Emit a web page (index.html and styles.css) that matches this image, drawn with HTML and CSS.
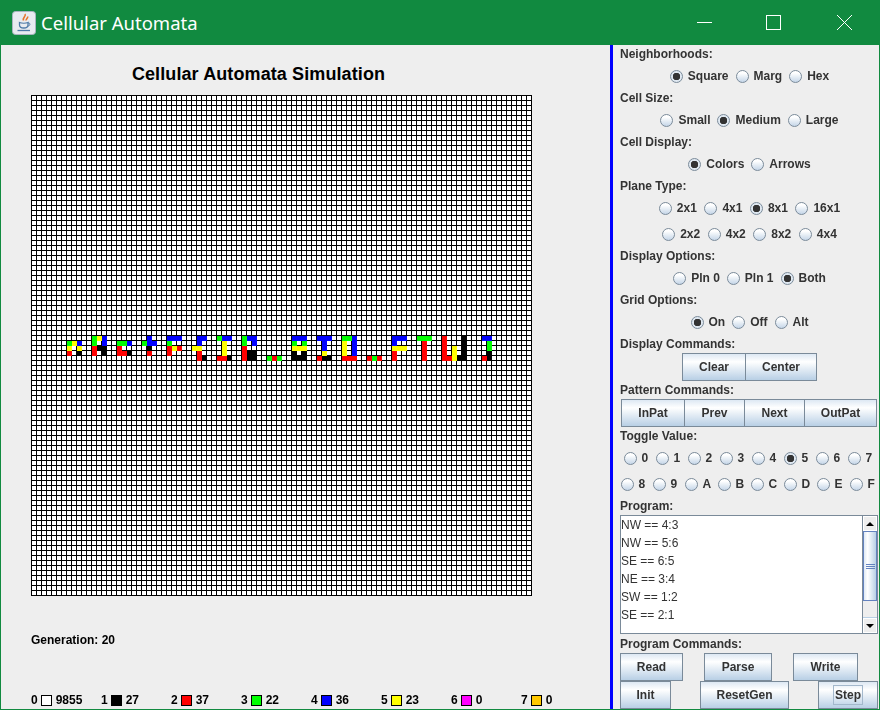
FILE: index.html
```html
<!DOCTYPE html>
<html lang="en">

<head>
    <meta charset="UTF-8">
    <title>Cellular Automata</title>
    <link rel="stylesheet" href="styles.css">
</head>

<body>
    <div class="window">
        <header class="titlebar">
            <svg class="app-icon" width="24" height="24" viewBox="0 0 24 24">
                <rect x="0.5" y="0.5" width="23" height="23" rx="3" fill="#e8ebf0" stroke="#aab4c0" />
                <path d="M13 3c1.5 2.500-3 3.500-1.500 6.500M15.500 5.500c1 1.500-2 2.500-1.200 4" fill="none" stroke="#e8742a" stroke-width="1.600" />
                <path d="M7.500 11.500c2 .8 6.500 .8 8.500 0v2.500c0 2-1.800 3-4.200 3s-4.300-1-4.300-3z" fill="none" stroke="#4f7aa8" stroke-width="1.300" />
                <path d="M16 12c2.500-.5 2.800 2.500-.5 3.500" fill="none" stroke="#4f7aa8" />
                <path d="M5.500 19.500h12.500" stroke="#4f7aa8" stroke-width="1.300" />
            </svg>
            <span class="app-title">Cellular Automata</span>
            <div class="window-buttons">
                <svg class="win-btn win-min" width="15" height="15" viewBox="0 0 15 15">
                    <path d="M0 7.500h15" stroke="#fff" />
                </svg>
                <svg class="win-btn win-max" width="15" height="15" viewBox="0 0 15 15">
                    <rect x="0.500" y="0.500" width="14" height="14" fill="none" stroke="#fff" />
                </svg>
                <svg class="win-btn win-close" width="15" height="15" viewBox="0 0 15 15">
                    <path d="M0 0l15 15M15 0L0 15" stroke="#fff" />
                </svg>
            </div>
        </header>

        <div class="content">
            <main class="sim-panel">
                <h1>Cellular Automata Simulation</h1>
                <canvas id="grid" width="501" height="501"></canvas>
                <p class="generation">Generation: 20</p>
                <div class="legend">
                    <div class="legend-item">0<span class="swatch c0"></span>9855</div>
                    <div class="legend-item">1<span class="swatch c1"></span>27</div>
                    <div class="legend-item">2<span class="swatch c2"></span>37</div>
                    <div class="legend-item">3<span class="swatch c3"></span>22</div>
                    <div class="legend-item">4<span class="swatch c4"></span>36</div>
                    <div class="legend-item">5<span class="swatch c5"></span>23</div>
                    <div class="legend-item">6<span class="swatch c6"></span>0</div>
                    <div class="legend-item">7<span class="swatch c7"></span>0</div>
                </div>
            </main>

            <aside class="controls">
                <div class="label">Neighborhoods:</div>
                <div class="radios">
                    <label><input type="radio" name="hood" checked>Square</label>
                    <label><input type="radio" name="hood">Marg</label>
                    <label><input type="radio" name="hood">Hex</label>
                </div>

                <div class="label">Cell Size:</div>
                <div class="radios">
                    <label><input type="radio" name="size">Small</label>
                    <label><input type="radio" name="size" checked>Medium</label>
                    <label><input type="radio" name="size">Large</label>
                </div>

                <div class="label">Cell Display:</div>
                <div class="radios">
                    <label><input type="radio" name="display" checked>Colors</label>
                    <label><input type="radio" name="display">Arrows</label>
                </div>

                <div class="label">Plane Type:</div>
                <div class="radios radios-wide">
                    <label><input type="radio" name="plane">2x1</label>
                    <label><input type="radio" name="plane">4x1</label>
                    <label><input type="radio" name="plane" checked>8x1</label>
                    <label><input type="radio" name="plane">16x1</label>
                </div>
                <div class="radios radios-wide radios-next">
                    <label><input type="radio" name="plane">2x2</label>
                    <label><input type="radio" name="plane">4x2</label>
                    <label><input type="radio" name="plane">8x2</label>
                    <label><input type="radio" name="plane">4x4</label>
                </div>

                <div class="label">Display Options:</div>
                <div class="radios">
                    <label><input type="radio" name="plane-show">Pln 0</label>
                    <label><input type="radio" name="plane-show">Pln 1</label>
                    <label><input type="radio" name="plane-show" checked>Both</label>
                </div>

                <div class="label">Grid Options:</div>
                <div class="radios">
                    <label><input type="radio" name="grid-opt" checked>On</label>
                    <label><input type="radio" name="grid-opt">Off</label>
                    <label><input type="radio" name="grid-opt">Alt</label>
                </div>

                <div class="label">Display Commands:</div>
                <div class="buttons btns-display">
                    <button>Clear</button>
                    <button>Center</button>
                </div>

                <div class="label label-tight">Pattern Commands:</div>
                <div class="buttons btns-pattern">
                    <button>InPat</button>
                    <button>Prev</button>
                    <button>Next</button>
                    <button>OutPat</button>
                </div>

                <div class="label">Toggle Value:</div>
                <div class="radios toggle">
                    <label><input type="radio" name="toggle">0</label>
                    <label><input type="radio" name="toggle">1</label>
                    <label><input type="radio" name="toggle">2</label>
                    <label><input type="radio" name="toggle">3</label>
                    <label><input type="radio" name="toggle">4</label>
                    <label><input type="radio" name="toggle" checked>5</label>
                    <label><input type="radio" name="toggle">6</label>
                    <label><input type="radio" name="toggle">7</label>
                </div>
                <div class="radios toggle toggle-letters radios-next">
                    <label><input type="radio" name="toggle">8</label>
                    <label><input type="radio" name="toggle">9</label>
                    <label><input type="radio" name="toggle">A</label>
                    <label><input type="radio" name="toggle">B</label>
                    <label><input type="radio" name="toggle">C</label>
                    <label><input type="radio" name="toggle">D</label>
                    <label><input type="radio" name="toggle">E</label>
                    <label><input type="radio" name="toggle">F</label>
                </div>

                <div class="label">Program:</div>
                <div class="program">
                    <div class="program-text">
                        <div>NW == 4:3</div>
                        <div>NW == 5:6</div>
                        <div>SE == 6:5</div>
                        <div>NE == 3:4</div>
                        <div>SW == 1:2</div>
                        <div>SE == 2:1</div>
                    </div>
                    <div class="scrollbar">
                        <div class="scroll-btn"><span class="arrow-up"></span></div>
                        <div class="scroll-thumb"><span class="grip"></span></div>
                        <div class="scroll-track"></div>
                        <div class="scroll-btn"><span class="arrow-down"></span></div>
                    </div>
                </div>

                <div class="label label-program">Program Commands:</div>
                <div class="buttons btns-prog1">
                    <button>Read</button>
                    <button>Parse</button>
                    <button>Write</button>
                </div>
                <div class="buttons btns-prog2">
                    <button>Init</button>
                    <button>ResetGen</button>
                    <button><span class="focus-ring">Step</span></button>
                </div>
            </aside>
        </div>
    </div>

    <script src="script.js"></script>
</body>

</html>
```

FILE: styles.css
```css
:root {
    --panel: #eeeeee;
    --frame: #118a40;
    --metal-border: #7a8a99;
    --label-color: #333333;
}

* {
    margin: 0;
    padding: 0;
    box-sizing: border-box;
}

body {
    width: 880px;
    height: 710px;
    overflow: hidden;
    font-family: "Liberation Sans", Arial, sans-serif;
    font-size: 12px;
    font-weight: 700;
}

.window {
    width: 880px;
    height: 710px;
    display: flex;
    flex-direction: column;
    background: var(--panel);
    border: 1px solid var(--frame);
    border-top: none;
}

.titlebar {
    height: 45px;
    flex: none;
    display: flex;
    align-items: center;
    padding-left: 12px;
    margin: 0 -1px;
    background: var(--frame);
    color: #fff;
}

.app-icon {
    flex: none;
    margin-right: 5px;
}

.app-title {
    font-family: "Noto Sans", sans-serif;
    font-size: 18.5px;
    font-weight: 400;
}

.window-buttons {
    margin-left: auto;
    display: flex;
    align-items: center;
    padding-right: 28px;
    gap: 55px;
}

.win-max {
    position: relative;
    left: -1px;
}

.content {
    flex: 1;
    display: flex;
    min-height: 0;
}

/* left side */

.sim-panel {
    width: 609px;
    flex: none;
    padding-left: 30px;
    color: #000;
}

.sim-panel h1 {
    width: 455px;
    height: 50px;
    padding-top: 20px;
    font-size: 18px;
    line-height: 19px;
    letter-spacing: 0.1px;
    text-align: center;
}

#grid {
    display: block;
}

.generation {
    margin-top: 37px;
    line-height: 14px;
}

.legend {
    margin-top: 46px;
    display: grid;
    grid-template-columns: repeat(8, 70px);
}

.legend-item {
    display: flex;
    align-items: center;
    height: 14px;
    line-height: 14px;
}

.swatch {
    width: 11px;
    height: 11px;
    margin: 0 4px 0 3px;
    border: 1px solid #000;
}

.c0 { background: #ffffff; }
.c1 { background: #000000; }
.c2 { background: #ff0000; }
.c3 { background: #00ff00; }
.c4 { background: #0000ff; }
.c5 { background: #ffff00; }
.c6 { background: #ff00ff; }
.c7 { background: #ffc800; }

/* right side */

.controls {
    width: 270px;
    flex: none;
    border-left: 3px solid #0000ff;
    padding: 0 2px 0 6px;
    color: var(--label-color);
}

.label {
    height: 20px;
    line-height: 18px;
    padding-left: 1px;
}

.label-tight {
    height: 18px;
}

.label-program {
    margin-top: 1px;
}

.radios {
    height: 22px;
    margin-bottom: 2px;
    padding-left: 2px;
    display: flex;
    justify-content: center;
    align-items: center;
    gap: 7px;
}

.radios-wide {
    gap: 7.5px;
}

.radios-next {
    margin-top: 4px;
}

.radios label {
    display: flex;
    align-items: center;
    gap: 5px;
}

.radios input {
    appearance: none;
    width: 13px;
    height: 13px;
    border: 1px solid #7a8a99;
    border-radius: 50%;
    background: linear-gradient(#ffffff 20%, #c5d6e8);
}

.radios input:checked {
    background: radial-gradient(circle, #333333 0, #333333 3.5px, #dfe8f1 4px);
}

.toggle {
    display: grid;
    grid-template-columns: repeat(8, 32px);
    padding-left: 6px;
    gap: 0;
}

.toggle-letters {
    grid-template-columns: 32px 32px repeat(6, 33px);
}

.buttons {
    display: flex;
    height: 28px;
}

.buttons button {
    height: 28px;
    font: inherit;
    color: var(--label-color);
    border: 1px solid var(--metal-border);
    background: linear-gradient(#dde8f3 0, #ffffff 30%, #b8cfe5 100%);
}

.btns-display {
    margin: -2px 0 0 63px;
}

.btns-display button:nth-child(1) { width: 64px; }
.btns-display button:nth-child(2) { width: 72px; margin-left: -1px; }

.btns-pattern {
    margin-left: 2px;
}

.btns-pattern button:nth-child(1) { width: 64px; }
.btns-pattern button:nth-child(2) { width: 61px; margin-left: -1px; }
.btns-pattern button:nth-child(3) { width: 61px; margin-left: -1px; }
.btns-pattern button:nth-child(4) { width: 73px; margin-left: -1px; }

.btns-prog1 {
    margin: -2px 0 0 1px;
}

.btns-prog1 button:nth-child(1) { width: 63px; }
.btns-prog1 button:nth-child(2) { width: 68px; margin-left: 21px; }
.btns-prog1 button:nth-child(3) { width: 65px; margin-left: 21px; }

.btns-prog2 {
    margin-left: 1px;
}

.btns-prog2 button:nth-child(1) { width: 51px; }
.btns-prog2 button:nth-child(2) { width: 89px; margin-left: 29px; }
.btns-prog2 button:nth-child(3) { width: 60px; margin-left: 29px; }

.focus-ring {
    display: inline-block;
    padding: 2px 1px;
    border: 1px solid #a3b8cc;
    line-height: 14px;
}

.program {
    height: 119px;
    width: 258px;
    margin: -2px 0 0 1px;
    display: flex;
    border: 1px solid var(--metal-border);
    background: #fff;
}

.program-text {
    flex: 1;
    font-weight: 400;
    line-height: 18px;
}

.scrollbar {
    width: 15px;
    flex: none;
    display: flex;
    flex-direction: column;
    border-left: 1px solid var(--metal-border);
    background: var(--panel);
}

.scroll-btn {
    height: 15px;
    flex: none;
    display: flex;
    align-items: center;
    justify-content: center;
    border: 1px solid #fff;
    background: var(--panel);
}

.arrow-up,
.arrow-down {
    width: 0;
    height: 0;
    border-left: 4px solid transparent;
    border-right: 4px solid transparent;
}

.arrow-up { border-bottom: 4px solid #000; }
.arrow-down { border-top: 4px solid #000; }

.scroll-thumb {
    height: 70px;
    flex: none;
    display: flex;
    align-items: center;
    justify-content: center;
    border: 1px solid #6382bf;
    background: linear-gradient(90deg, #dde8f3, #ffffff 30%, #b8cfe5);
}

.grip {
    width: 9px;
    height: 5px;
    border-top: 1px solid #6382bf;
    border-bottom: 1px solid #6382bf;
    background: linear-gradient(#6382bf, #6382bf) center / 100% 1px no-repeat;
}

.scroll-track {
    flex: 1;
    border-bottom: 1px solid #b8cfe5;
}
```

FILE: script.js
```js
// colored cells per row: "column + color letter"
const COLORS = { k: '#000000', r: '#ff0000', g: '#00ff00', b: '#0000ff', y: '#ffff00' };

const CELLS = {
    48: '12g 13y 14b 23b 27b 28b 29b 33b 34b 37g 38b 39b 42g 43b 44b 52b 53b 54b 57b 58b 59b 62g 63g 64b 72b 73b 74b 77g 78g 79g 82r 86k 90b 91b',
    49: '7g 8y 9b 12g 14b 17g 18g 19b 22g 23b 24b 27g 33b 38y 42g 44b 52g 54g 58b 62y 64b 72b 78r 82r 86k 91g',
    50: '7y 9y 12r 13k 14k 17r 23k 27r 28y 29r 32y 33y 38y 42r 52y 53y 54y 58b 62y 64b 72y 73y 74y 78r 82r 84y 86k 91g',
    51: '7r 9k 12r 14k 17r 18r 19k 23r 27r 33r 38y 42r 43k 44k 52k 54k 58y 62y 64b 72r 78r 82r 84y 86k 91k',
    52: '33r 34k 37r 38r 39k 42r 43k 44k 47g 48r 49g 52k 53k 54k 57r 58k 59k 62r 63r 64r 67r 68g 69r 72r 78r 82r 83r 84y 85k 86k 90r 91k'
};

function dibujarGrid() {
    const ctx = document.getElementById('grid').getContext('2d');
    ctx.fillStyle = '#000000';
    ctx.fillRect(0, 0, 501, 501);
    for (let r = 0; r < 100; r++) {
        for (let c = 0; c < 100; c++) {
            ctx.fillStyle = '#ffffff';
            ctx.fillRect(5 * c + 1, 5 * r + 1, 4, 4);
        }
    }
    Object.keys(CELLS).forEach(r => {
        CELLS[r].split(' ').forEach(cell => {
            const c = parseInt(cell, 10);
            ctx.fillStyle = COLORS[cell.slice(-1)];
            ctx.fillRect(5 * c + 1, 5 * r + 1, 5, 5);
        });
    });
}

dibujarGrid();
```
